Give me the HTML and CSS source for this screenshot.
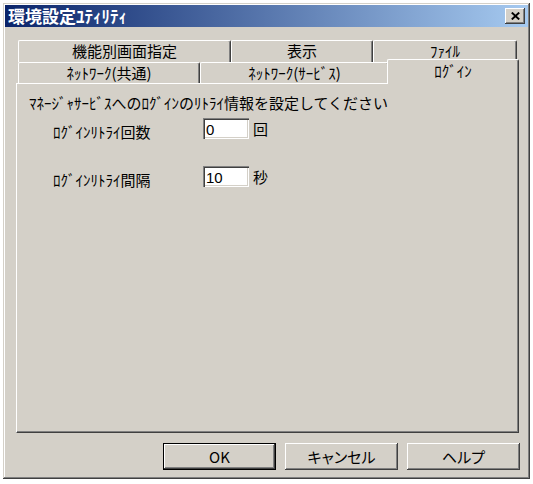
FILE: index.html
```html
<!DOCTYPE html>
<html lang="ja">
<head>
    <meta charset="UTF-8">
    <title>環境設定ﾕﾃｨﾘﾃｨ</title>
    <link rel="stylesheet" href="styles.css">
</head>
<body>
    <div class="window">
        <div class="titlebar">
            <span class="title">環境設定ﾕﾃｨﾘﾃｨ</span>
            <span class="close">
                <svg width="9" height="8" viewBox="0 0 9 8"><path d="M0.8 0.6 L8.2 7.4 M8.2 0.6 L0.8 7.4" stroke="#000" stroke-width="2"/></svg>
            </span>
        </div>

        <div class="dialog">
            <div class="tabs">
                <div class="tab-row back">
                    <div class="tab t-func">機能別画面指定</div>
                    <div class="tab t-disp">表示</div>
                    <div class="tab t-file">ﾌｧｲﾙ</div>
                </div>
                <div class="tab-row front">
                    <div class="tab t-net">ﾈｯﾄﾜｰｸ(共通)</div>
                    <div class="tab t-svc">ﾈｯﾄﾜｰｸ(ｻｰﾋﾞｽ)</div>
                    <div class="tab t-login selected">ﾛｸﾞｲﾝ</div>
                </div>
            </div>

            <div class="panel">
                <p class="lead">ﾏﾈｰｼﾞｬｻｰﾋﾞｽへのﾛｸﾞｲﾝのﾘﾄﾗｲ情報を設定してください</p>
                <div class="form">
                    <label for="count">ﾛｸﾞｲﾝﾘﾄﾗｲ回数</label>
                    <input type="text" id="count" value="0">
                    <span class="unit">回</span>

                    <label for="interval">ﾛｸﾞｲﾝﾘﾄﾗｲ間隔</label>
                    <input type="text" id="interval" value="10">
                    <span class="unit">秒</span>
                </div>
            </div>

            <div class="buttons">
                <button class="btn default">OK</button>
                <button class="btn">キャンセル</button>
                <button class="btn">ヘルプ</button>
            </div>
        </div>
    </div>
</body>
</html>
```

FILE: styles.css
```css
* {
    margin: 0;
    padding: 0;
    box-sizing: border-box;
}

body {
    background: #fff;
    font-family: "Noto Sans CJK JP", "Liberation Sans", sans-serif;
    font-size: 15px;
    color: #000;
}

.window {
    margin: 3px;
    width: 527px;
    height: 476px;
    padding: 2px;
    background: #d4d0c8;
    box-shadow: inset -1px -1px #404040, inset 1px 1px #d4d0c8,
                inset -2px -2px #808080, inset 2px 2px #fff;
    display: flex;
    flex-direction: column;
}

.titlebar {
    height: 22px;
    padding: 0 3px 0 3px;
    background: linear-gradient(to right, #0a246a, #a6caf0);
    display: flex;
    align-items: center;
    justify-content: space-between;
}

.title {
    color: #fff;
    font-weight: bold;
    font-size: 17px;
    line-height: 20px;
}

.close {
    width: 20px;
    height: 16px;
    background: #d4d0c8;
    box-shadow: inset -1px -1px #404040, inset 1px 1px #fff,
                inset -2px -2px #808080;
    display: flex;
    align-items: center;
    justify-content: center;
}

.dialog {
    flex: 1;
    padding: 13px 9px 0 11px;
    display: flex;
    flex-direction: column;
}

/* tab strip */
.tabs {
    padding: 0 2px;
}

.tab-row {
    display: flex;
}

.tab {
    flex: none;
    background: #d4d0c8;
    border-top: 1px solid #fff;
    border-left: 1px solid #fff;
    border-right: 1px solid #404040;
    border-radius: 2px 2px 0 0;
    box-shadow: inset -1px 0 #808080;
    text-align: center;
    white-space: nowrap;
    line-height: 19px;
}

.back .tab {
    height: 22px;
}

.front .tab {
    height: 21px;
}

.t-func { width: 213px; }
.t-disp { width: 142px; }
.t-file { width: 144px; }
.t-net  { width: 182px; }
.t-svc  { width: 189px; }

.tab.selected {
    position: relative;
    z-index: 2;
    width: 132px;
    height: 25px;
    margin: -3px -2px -1px -2px;
    padding-top: 1px;
}

.panel {
    height: 350px;
    background: #d4d0c8;
    border-top: 1px solid #fff;
    border-left: 1px solid #fff;
    border-right: 1px solid #404040;
    border-bottom: 1px solid #404040;
    box-shadow: inset -1px -1px #808080;
    padding: 10px 0 0 12px;
}

.lead {
    line-height: 18px;
}

.form {
    margin-top: 6px;
    padding-left: 24px;
    display: grid;
    grid-template-columns: 150px 46px auto;
    row-gap: 27px;
    align-items: center;
}

.form label {
    line-height: 18px;
    position: relative;
    top: 3px;
}

.form input {
    width: 46px;
    height: 21px;
    border: none;
    background: #fff;
    padding: 1px 3px 0;
    font: 15px "Liberation Sans", sans-serif;
    box-shadow: inset 1px 1px #808080, inset 2px 2px #404040,
                inset -1px -1px #fff, inset -2px -2px #d4d0c8;
    outline: none;
}

.unit {
    margin-left: 4px;
}

.buttons {
    margin-top: 10px;
    margin-right: -1px;
    display: flex;
    justify-content: flex-end;
    gap: 9px;
}

.btn {
    width: 113px;
    height: 27px;
    border: none;
    background: #d4d0c8;
    font: 15px "Noto Sans CJK JP", "Liberation Sans", sans-serif;
    font-feature-settings: "palt";
    box-shadow: inset -1px -1px #404040, inset 1px 1px #fff,
                inset -2px -2px #808080;
}

.btn.default {
    box-shadow: inset 0 0 0 1px #000, inset -2px -2px #404040,
                inset 2px 2px #fff, inset -3px -3px #808080;
}
```
